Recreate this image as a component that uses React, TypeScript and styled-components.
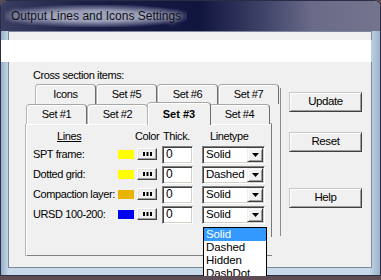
import React from "react";
import styled, { createGlobalStyle } from "styled-components";

const GlobalStyle = createGlobalStyle`
  html, body {
    margin: 0;
    padding: 0;
    background: #5e4c55;
  }
  * {
    box-sizing: border-box;
  }
`;

const Window = styled.div`
  width: 381px;
  height: 276px;
  display: flex;
  flex-direction: column;
  background: linear-gradient(to right, #98aec8, #c8d9ea 2%, #c8d9ea 97%, #9cb2ca);
  border: 1px solid #2a2d44;
  border-radius: 7px 7px 0 0;
  font-family: "Liberation Sans", Arial, sans-serif;
  font-size: 11px;
  letter-spacing: -0.4px;
  color: #000;
`;

const TitleBar = styled.div`
  height: 30px;
  flex: none;
  display: flex;
  align-items: center;
  padding-left: 4px;
  border-radius: 6px 6px 0 0;
  background: linear-gradient(
    90deg,
    #3a3e62 0%,
    #1c2049 22%,
    #10153e 52%,
    #3c3f66 68%,
    #6a6b88 82%,
    #74748e 100%
  );
`;

const Title = styled.span`
  font-size: 12px;
  letter-spacing: 0;
  padding: 4px 6px;
  color: #101018;
  background: radial-gradient(
    ellipse at center,
    rgba(180, 183, 204, 0.8) 35%,
    rgba(150, 153, 182, 0.45) 60%,
    rgba(120, 122, 150, 0) 78%
  );
  text-shadow: 0 0 5px #c8cce0;
`;

const TopStrip = styled.div`
  height: 9px;
  flex: none;
  margin: 0 8px 0 7px;
  background: #f0f0f0;
  border: 1px solid #7d889c;
  border-bottom: none;
`;

const WhiteBand = styled.div`
  height: 22px;
  flex: none;
  margin-right: 9px;
  background: #fff;
`;

const Body = styled.div`
  flex: 1;
  display: flex;
  margin: 0 8px 7px 7px;
  padding: 7px 0 0 17px;
  background: #f0f0f0;
  border: 1px solid #7d889c;
  border-top: none;
`;

const LeftColumn = styled.div`
  position: relative;
  width: 255px;
  display: flex;
  flex-direction: column;

  &::after {
    content: "";
    position: absolute;
    right: 0;
    top: 19px;
    height: 148px;
    border-right: 1px solid #8c8c8c;
  }
`;

const Caption = styled.div`
  height: 13px;
  line-height: 13px;
  margin-left: 7px;
`;

const TabRow = styled.div<{ $indent: number; $top?: number }>`
  display: flex;
  align-items: flex-end;
  height: 20px;
  margin-top: ${(p) => p.$top ?? 0}px;
  margin-left: ${(p) => p.$indent}px;
`;

const Tab = styled.div<{ $active?: boolean }>`
  position: relative;
  z-index: ${(p) => (p.$active ? 2 : 1)};
  width: ${(p) => (p.$active ? 64 : 61)}px;
  height: ${(p) => (p.$active ? 23 : 20)}px;
  margin: ${(p) => (p.$active ? "-3px -2px -1px -1px" : "0")};
  padding-top: ${(p) => (p.$active ? 4 : 2)}px;
  text-align: center;
  line-height: 14px;
  font-weight: ${(p) => (p.$active ? "bold" : "normal")};
  letter-spacing: ${(p) => (p.$active ? "0" : "-0.4px")};
  background: #f0f0f0;
  border: 1px solid;
  border-bottom: none;
  border-color: #a8a8a8 #6c6c6c transparent #b4b4b4;
  border-radius: 4px 4px 0 0;
  box-shadow: inset 1px 1px 0 #fff;
`;

const Panel = styled.div`
  position: relative;
  width: 246px;
  height: 132px;
  padding: 5px 0 0 6px;
  border-top: 1px solid #fff;
  border-left: 1px solid #fff;
  border-bottom: 1px solid #808080;
  box-shadow: -1px 0 0 #b4b4b4, 0 -1px 0 #b4b4b4;

  &::after {
    content: "";
    position: absolute;
    right: 0;
    top: -1px;
    height: 113px;
    border-right: 1px solid #7a7a7a;
  }
`;

const Grid = styled.div`
  display: grid;
  grid-template-columns: 85px 19px 25px 40px 64px;
  grid-auto-rows: 20px;
  align-items: center;
`;

const HeaderRow = styled(Grid)`
  grid-auto-rows: 12px;
  margin-bottom: 3px;
  line-height: 12px;
`;

const HeaderCell = styled.div<{ $indent: number; $span?: number }>`
  padding-left: ${(p) => p.$indent}px;
  grid-column: span ${(p) => p.$span ?? 1};
  white-space: nowrap;
`;

const LinesHead = styled.span`
  text-decoration: underline;
`;

const RowLabel = styled.div`
  white-space: nowrap;
  margin-top: -3px;
`;

const Swatch = styled.div<{ $color: string }>`
  width: 16px;
  height: 9px;
  margin-top: -2px;
  background: ${(p) => p.$color};
`;

const DotButton = styled.div`
  width: 20px;
  height: 12px;
  margin-top: -2px;
  display: flex;
  align-items: center;
  justify-content: center;
  background: #f0f0f0;
  border: 1px solid;
  border-color: #fff #404040 #404040 #fff;
  box-shadow: inset -1px -1px 0 #a0a0a0, inset 1px 1px 0 #e3e3e3;
`;

const Field = styled.div<{ $width: number }>`
  position: relative;
  width: ${(p) => p.$width}px;
  height: 18px;
  padding-left: 3px;
  line-height: 15px;
  font-size: 12px;
  letter-spacing: 0;
  background: #fff;
  border: 1px solid;
  border-color: #808080 #fff #fff #808080;
  box-shadow: inset 1px 1px 0 #404040, inset -1px -1px 0 #d4d0c8;
`;

const SelectText = styled.span`
  font-size: 11.5px;
  letter-spacing: -0.2px;
`;

const ArrowButton = styled.div`
  position: absolute;
  right: 1px;
  top: 1px;
  width: 16px;
  height: 14px;
  display: flex;
  align-items: center;
  justify-content: center;
  background: #f0f0f0;
  border: 1px solid;
  border-color: #f0f0f0 #404040 #404040 #f0f0f0;
  box-shadow: inset 1px 1px 0 #fff, inset -1px -1px 0 #a0a0a0;
`;

const DropList = styled.div`
  position: absolute;
  z-index: 5;
  left: 0;
  top: 20px;
  width: 64px;
  background: #fff;
  border: 1px solid #000;
`;

const DropItem = styled.div<{ $active?: boolean }>`
  height: 13px;
  line-height: 13px;
  padding-left: 2px;
  font-size: 11.5px;
  letter-spacing: -0.1px;
  background: ${(p) => (p.$active ? "#3399ff" : "#fff")};
  color: ${(p) => (p.$active ? "#fff" : "#000")};
`;

const ButtonColumn = styled.div`
  display: flex;
  flex-direction: column;
  margin-left: 8px;
  padding-top: 23px;
`;

const Button = styled.div<{ $gap: number }>`
  width: 73px;
  height: 20px;
  margin-top: ${(p) => p.$gap}px;
  line-height: 17px;
  text-align: center;
  font-size: 11.5px;
  background: #f0f0f0;
  border: 1px solid;
  border-color: #c8c8c8 #404040 #404040 #c8c8c8;
  box-shadow: inset 1px 1px 0 #fff, inset -1px -1px 0 #a0a0a0;
`;

const lines = [
  { label: "SPT frame:", color: "#ffff00", type: "Solid" },
  { label: "Dotted grid:", color: "#ffff00", type: "Dashed" },
  { label: "Compaction layer:", color: "#e8b400", type: "Solid" },
  { label: "URSD 100-200:", color: "#0000f0", type: "Solid" },
];

const linetypes = ["Solid", "Dashed", "Hidden", "DashDot"];

function Dots() {
  return (
    <svg width="9" height="4" viewBox="0 0 9 4">
      <rect x="0" y="0" width="2" height="4" fill="#000" />
      <rect x="3.5" y="0" width="2" height="4" fill="#000" />
      <rect x="7" y="0" width="2" height="4" fill="#000" />
    </svg>
  );
}

function Arrow() {
  return (
    <svg width="7" height="4" viewBox="0 0 7 4">
      <path d="M0 0h7L3.5 4z" fill="#000" />
    </svg>
  );
}

function LineSelect({ value, open }: { value: string; open?: boolean }) {
  return (
    <Field $width={63}>
      <SelectText>{value}</SelectText>
      <ArrowButton>
        <Arrow />
      </ArrowButton>
      {open && (
        <DropList>
          {linetypes.map((t) => (
            <DropItem key={t} $active={t === value}>
              {t}
            </DropItem>
          ))}
        </DropList>
      )}
    </Field>
  );
}

function App() {
  return (
    <>
      <GlobalStyle />
      <Window>
        <TitleBar>
          <Title>Output Lines and Icons Settings</Title>
        </TitleBar>
        <TopStrip />
        <WhiteBand />
        <Body>
          <LeftColumn>
            <Caption>Cross section items:</Caption>
            <TabRow $indent={9} $top={2}>
              <Tab>Icons</Tab>
              <Tab>Set #5</Tab>
              <Tab>Set #6</Tab>
              <Tab>Set #7</Tab>
            </TabRow>
            <TabRow $indent={0}>
              <Tab>Set #1</Tab>
              <Tab>Set #2</Tab>
              <Tab $active>Set #3</Tab>
              <Tab>Set #4</Tab>
            </TabRow>
            <Panel>
              <HeaderRow>
                <HeaderCell $indent={24}>
                  <LinesHead>Lines</LinesHead>
                </HeaderCell>
                <HeaderCell $indent={17} $span={2}>
                  Color
                </HeaderCell>
                <HeaderCell $indent={1}>Thick.</HeaderCell>
                <HeaderCell $indent={8}>Linetype</HeaderCell>
              </HeaderRow>
              <Grid>
                {lines.map((l, i) => (
                  <React.Fragment key={l.label}>
                    <RowLabel>{l.label}</RowLabel>
                    <Swatch $color={l.color} />
                    <DotButton>
                      <Dots />
                    </DotButton>
                    <Field $width={31}>0</Field>
                    <LineSelect value={l.type} open={i === lines.length - 1} />
                  </React.Fragment>
                ))}
              </Grid>
            </Panel>
          </LeftColumn>
          <ButtonColumn>
            <Button $gap={0}>Update</Button>
            <Button $gap={20}>Reset</Button>
            <Button $gap={36}>Help</Button>
          </ButtonColumn>
        </Body>
      </Window>
    </>
  );
}

export default App;
